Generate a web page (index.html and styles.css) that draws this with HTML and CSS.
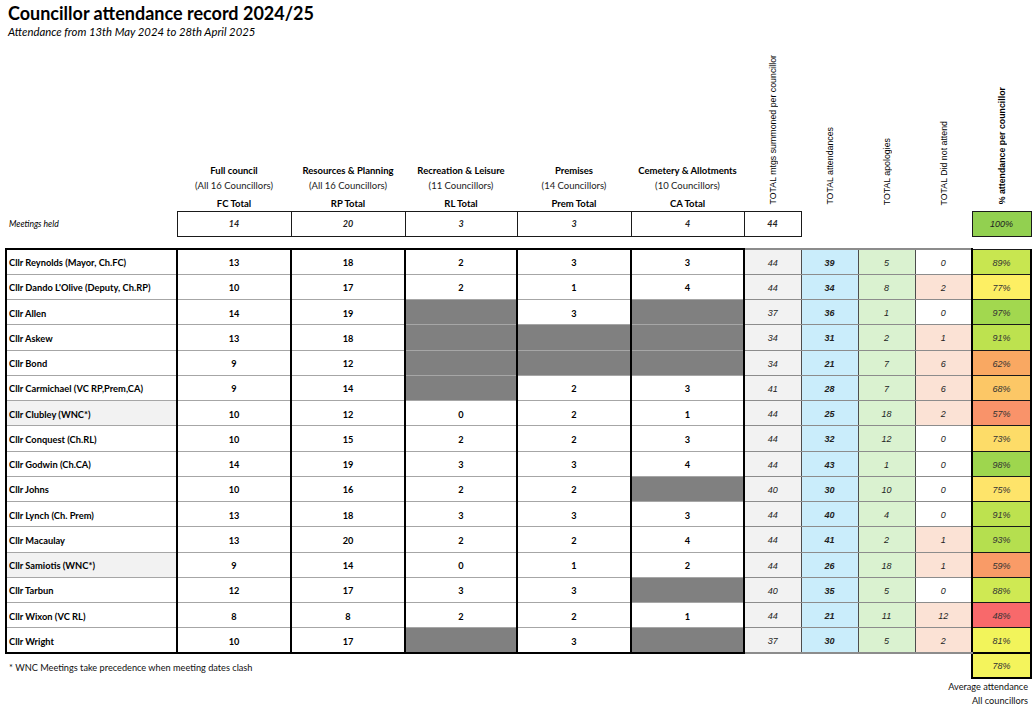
FILE: index.html
```html
<!DOCTYPE html>
<html lang="en">
<head>
<meta charset="utf-8">
<title>Councillor attendance record 2024/25</title>
<link rel="stylesheet" href="styles.css">
</head>
<body>
<header class="page-head">
  <h1 class="title">Councillor attendance record 2024/25</h1>
  <p class="subtitle">Attendance from 13th May 2024 to 28th April 2025</p>
</header>
<table class="att">
  <colgroup>
    <col class="c-name"><col class="c-fc"><col class="c-rp"><col class="c-rl"><col class="c-prem"><col class="c-ca">
    <col class="c-t"><col class="c-t"><col class="c-t"><col class="c-t"><col class="c-pct">
  </colgroup>
  <thead>
    <tr class="hdr">
      <th></th>
      <th class="grp"><div class="grp-in"><span class="g-name">Full council</span><span class="g-sub">(All 16 Councillors)</span><span class="g-total">FC Total</span></div></th>
      <th class="grp"><div class="grp-in"><span class="g-name">Resources &amp; Planning</span><span class="g-sub">(All 16 Councillors)</span><span class="g-total">RP Total</span></div></th>
      <th class="grp"><div class="grp-in"><span class="g-name">Recreation &amp; Leisure</span><span class="g-sub">(11 Councillors)</span><span class="g-total">RL Total</span></div></th>
      <th class="grp"><div class="grp-in"><span class="g-name">Premises</span><span class="g-sub">(14 Councillors)</span><span class="g-total">Prem Total</span></div></th>
      <th class="grp"><div class="grp-in"><span class="g-name">Cemetery &amp; Allotments</span><span class="g-sub">(10 Councillors)</span><span class="g-total">CA Total</span></div></th>
      <th class="rot"><span class="rot-txt">TOTAL mtgs summoned per councillor</span></th>
      <th class="rot"><span class="rot-txt">TOTAL attendances</span></th>
      <th class="rot"><span class="rot-txt">TOTAL apologies</span></th>
      <th class="rot"><span class="rot-txt">TOTAL Did not attend</span></th>
      <th class="rot"><span class="rot-txt rot-bold">% attendance per councillor</span></th>
    </tr>
    <tr class="held">
      <td class="held-label">Meetings held</td>
      <td class="hb">14</td><td class="hb">20</td><td class="hb">3</td><td class="hb">3</td><td class="hb">4</td><td class="hb">44</td>
      <td></td><td></td><td></td>
      <td class="hb full">100%</td>
    </tr>
    <tr class="gap"><td colspan="11"></td></tr>
  </thead>
  <tbody>
    <tr class="row"><td class="nm">Cllr Reynolds (Mayor, Ch.FC)</td><td class="num">13</td><td class="num">18</td><td class="num">2</td><td class="num">3</td><td class="num">3</td><td class="t mtg">44</td><td class="t att-c">39</td><td class="t apo">5</td><td class="t dna">0</td><td class="pct" style="background:#c8e650">89%</td></tr>
    <tr class="row"><td class="nm">Cllr Dando L'Olive (Deputy, Ch.RP)</td><td class="num">10</td><td class="num">17</td><td class="num">2</td><td class="num">1</td><td class="num">4</td><td class="t mtg">44</td><td class="t att-c">34</td><td class="t apo">8</td><td class="t dna pos">2</td><td class="pct" style="background:#fdef63">77%</td></tr>
    <tr class="row"><td class="nm">Cllr Allen</td><td class="num">14</td><td class="num">19</td><td class="num na"></td><td class="num">3</td><td class="num na"></td><td class="t mtg">37</td><td class="t att-c">36</td><td class="t apo">1</td><td class="t dna">0</td><td class="pct" style="background:#a2d84f">97%</td></tr>
    <tr class="row"><td class="nm">Cllr Askew</td><td class="num">13</td><td class="num">18</td><td class="num na"></td><td class="num na"></td><td class="num na"></td><td class="t mtg">34</td><td class="t att-c">31</td><td class="t apo">2</td><td class="t dna pos">1</td><td class="pct" style="background:#bde24f">91%</td></tr>
    <tr class="row"><td class="nm">Cllr Bond</td><td class="num">9</td><td class="num">12</td><td class="num na"></td><td class="num na"></td><td class="num na"></td><td class="t mtg">34</td><td class="t att-c">21</td><td class="t apo">7</td><td class="t dna pos">6</td><td class="pct" style="background:#f9a862">62%</td></tr>
    <tr class="row"><td class="nm">Cllr Carmichael (VC RP,Prem,CA)</td><td class="num">9</td><td class="num">14</td><td class="num na"></td><td class="num">2</td><td class="num">3</td><td class="t mtg">41</td><td class="t att-c">28</td><td class="t apo">7</td><td class="t dna pos">6</td><td class="pct" style="background:#fcc766">68%</td></tr>
    <tr class="row"><td class="nm wnc">Cllr Clubley (WNC*)</td><td class="num">10</td><td class="num">12</td><td class="num">0</td><td class="num">2</td><td class="num">1</td><td class="t mtg">44</td><td class="t att-c">25</td><td class="t apo">18</td><td class="t dna pos">2</td><td class="pct" style="background:#f9936a">57%</td></tr>
    <tr class="row"><td class="nm">Cllr Conquest (Ch.RL)</td><td class="num">10</td><td class="num">15</td><td class="num">2</td><td class="num">2</td><td class="num">3</td><td class="t mtg">44</td><td class="t att-c">32</td><td class="t apo">12</td><td class="t dna">0</td><td class="pct" style="background:#fddc68">73%</td></tr>
    <tr class="row"><td class="nm">Cllr Godwin (Ch.CA)</td><td class="num">14</td><td class="num">19</td><td class="num">3</td><td class="num">3</td><td class="num">4</td><td class="t mtg">44</td><td class="t att-c">43</td><td class="t apo">1</td><td class="t dna">0</td><td class="pct" style="background:#9ed64e">98%</td></tr>
    <tr class="row"><td class="nm">Cllr Johns</td><td class="num">10</td><td class="num">16</td><td class="num">2</td><td class="num">2</td><td class="num na"></td><td class="t mtg">40</td><td class="t att-c">30</td><td class="t apo">10</td><td class="t dna">0</td><td class="pct" style="background:#fee46a">75%</td></tr>
    <tr class="row"><td class="nm">Cllr Lynch (Ch. Prem)</td><td class="num">13</td><td class="num">18</td><td class="num">3</td><td class="num">3</td><td class="num">3</td><td class="t mtg">44</td><td class="t att-c">40</td><td class="t apo">4</td><td class="t dna">0</td><td class="pct" style="background:#bde24f">91%</td></tr>
    <tr class="row"><td class="nm">Cllr Macaulay</td><td class="num">13</td><td class="num">20</td><td class="num">2</td><td class="num">2</td><td class="num">4</td><td class="t mtg">44</td><td class="t att-c">41</td><td class="t apo">2</td><td class="t dna pos">1</td><td class="pct" style="background:#b5df4f">93%</td></tr>
    <tr class="row"><td class="nm wnc">Cllr Samiotis (WNC*)</td><td class="num">9</td><td class="num">14</td><td class="num">0</td><td class="num">1</td><td class="num">2</td><td class="t mtg">44</td><td class="t att-c">26</td><td class="t apo">18</td><td class="t dna pos">1</td><td class="pct" style="background:#f99b67">59%</td></tr>
    <tr class="row"><td class="nm">Cllr Tarbun</td><td class="num">12</td><td class="num">17</td><td class="num">3</td><td class="num">3</td><td class="num na"></td><td class="t mtg">40</td><td class="t att-c">35</td><td class="t apo">5</td><td class="t dna">0</td><td class="pct" style="background:#cfe953">88%</td></tr>
    <tr class="row"><td class="nm">Cllr Wixon (VC RL)</td><td class="num">8</td><td class="num">8</td><td class="num">2</td><td class="num">2</td><td class="num">1</td><td class="t mtg">44</td><td class="t att-c">21</td><td class="t apo">11</td><td class="t dna pos">12</td><td class="pct" style="background:#f8696b">48%</td></tr>
    <tr class="row"><td class="nm">Cllr Wright</td><td class="num">10</td><td class="num">17</td><td class="num na"></td><td class="num">3</td><td class="num na"></td><td class="t mtg">37</td><td class="t att-c">30</td><td class="t apo">5</td><td class="t dna pos">2</td><td class="pct" style="background:#f2f45b">81%</td></tr>
  </tbody>
  <tfoot>
    <tr class="foot">
      <td class="note" colspan="10">* WNC Meetings take precedence when meeting dates clash</td>
      <td class="avg">78%</td>
    </tr>
  </tfoot>
</table>
<div class="avg-label">
  <span>Average attendance</span>
  <span>All councillors</span>
</div>
</body>
</html>
```

FILE: styles.css
```css
* { box-sizing: border-box; }

body {
  margin: 0;
  padding: 0 4px 0 5px;
  background: #fff;
  color: #000;
  font-family: "Lato", "Liberation Sans", sans-serif;
}

.page-head { padding: 2px 0 0 3px; }

.title {
  margin: 0;
  font-size: 18px;
  line-height: 22px;
  font-weight: 700;
}

.subtitle {
  margin: 0;
  font-size: 11.3px;
  line-height: 16px;
  font-style: italic;
}

.att {
  border-collapse: collapse;
  table-layout: fixed;
  width: 1025px;
}

.att th, .att td { padding: 0; }

.c-name { width: 171px; }
.c-fc { width: 114px; }
.c-rp { width: 114px; }
.c-rl { width: 112px; }
.c-prem { width: 114px; }
.c-ca { width: 113px; }
.c-t { width: 57px; }
.c-pct { width: 59px; }

/* header */
.hdr th {
  height: 171px;
  vertical-align: bottom;
  font-weight: 400;
  text-align: center;
}

.grp-in {
  display: flex;
  flex-direction: column;
  align-items: center;
  font-size: 9.5px;
}

.g-name { font-weight: 700; line-height: 14px; }
.g-sub { line-height: 16px; color: #222; }
.g-total { font-weight: 700; line-height: 14px; margin-top: 3px; }

.rot { padding-bottom: 3px !important; }

.rot-txt {
  display: inline-block;
  writing-mode: vertical-rl;
  transform: rotate(180deg);
  font-family: "Liberation Sans", Arial, sans-serif;
  font-size: 8.8px;
  line-height: 10px;
  white-space: nowrap;
}

.rot-bold { font-weight: 700; }

/* meetings held row */
.held td { height: 25px; vertical-align: middle; }

.held-label {
  font-style: italic;
  font-size: 8.6px;
  padding-left: 3px !important;
}

.held .hb {
  border: 1px solid #1a1a1a;
  text-align: center;
  font-style: italic;
  font-weight: 700;
  font-size: 9px;
  color: #222;
}

.held .full { background: #92d050; border-width: 1.5px; font-weight: 400; font-family: "Liberation Sans", Arial, sans-serif; }

.gap td { height: 13px; }

/* data rows */
.row td {
  height: 25.25px;
  padding-top: 2px;
  vertical-align: middle;
  border-top: 1px solid #a6a6a6;
  border-bottom: 1px solid #a6a6a6;
}

.row .nm {
  border-left: 2px solid #000;
  border-right: 2px solid #000;
  padding-left: 2px;
  font-weight: 700;
  font-size: 9.3px;
  white-space: nowrap;
}

.row .nm.wnc { background: #f2f2f2; }

.row .num {
  border-right: 2px solid #000;
  text-align: center;
  font-weight: 700;
  font-size: 9.2px;
}

.row .num.na { background: #808080; }

.row .t {
  border-right: 1px solid #4d4d4d;
  border-top-color: #8c8c8c;
  border-bottom-color: #8c8c8c;
  text-align: center;
  font-family: "Liberation Sans", Arial, sans-serif;
  font-style: italic;
  font-size: 9px;
  color: #222;
}

.row .mtg { background: #f2f2f2; }
.row .att-c { background: #caedfb; font-weight: 700; }
.row .apo { background: #daf2d0; }
.row .dna { background: #fff; border-right: 2px solid #000; }
.row .dna.pos { background: #fbe2d5; }

.row .pct {
  border-right: 2px solid #000;
  border-top: 1px solid #1a1a1a;
  border-bottom: 1px solid #1a1a1a;
  text-align: center;
  font-family: "Liberation Sans", Arial, sans-serif;
  font-style: italic;
  font-size: 9px;
  color: #333;
}

tbody tr:first-child td { border-top: 2px solid #000; }
tbody tr:last-child td { border-bottom: 2px solid #000; }

/* footer */
.foot td { height: 25px; vertical-align: middle; }

.note {
  font-size: 9.2px;
  padding: 2px 0 0 3px !important;
  color: #111;
}

.avg {
  border: 2px solid #000;
  background: #f4f45c;
  text-align: center;
  font-family: "Liberation Sans", Arial, sans-serif;
  font-style: italic;
  font-size: 9px;
  color: #333;
}

.avg-label {
  width: 1025px;
  display: flex;
  flex-direction: column;
  align-items: flex-end;
  padding: 1px 2px 0 0;
  font-size: 9.2px;
  line-height: 14px;
  color: #111;
}
```
